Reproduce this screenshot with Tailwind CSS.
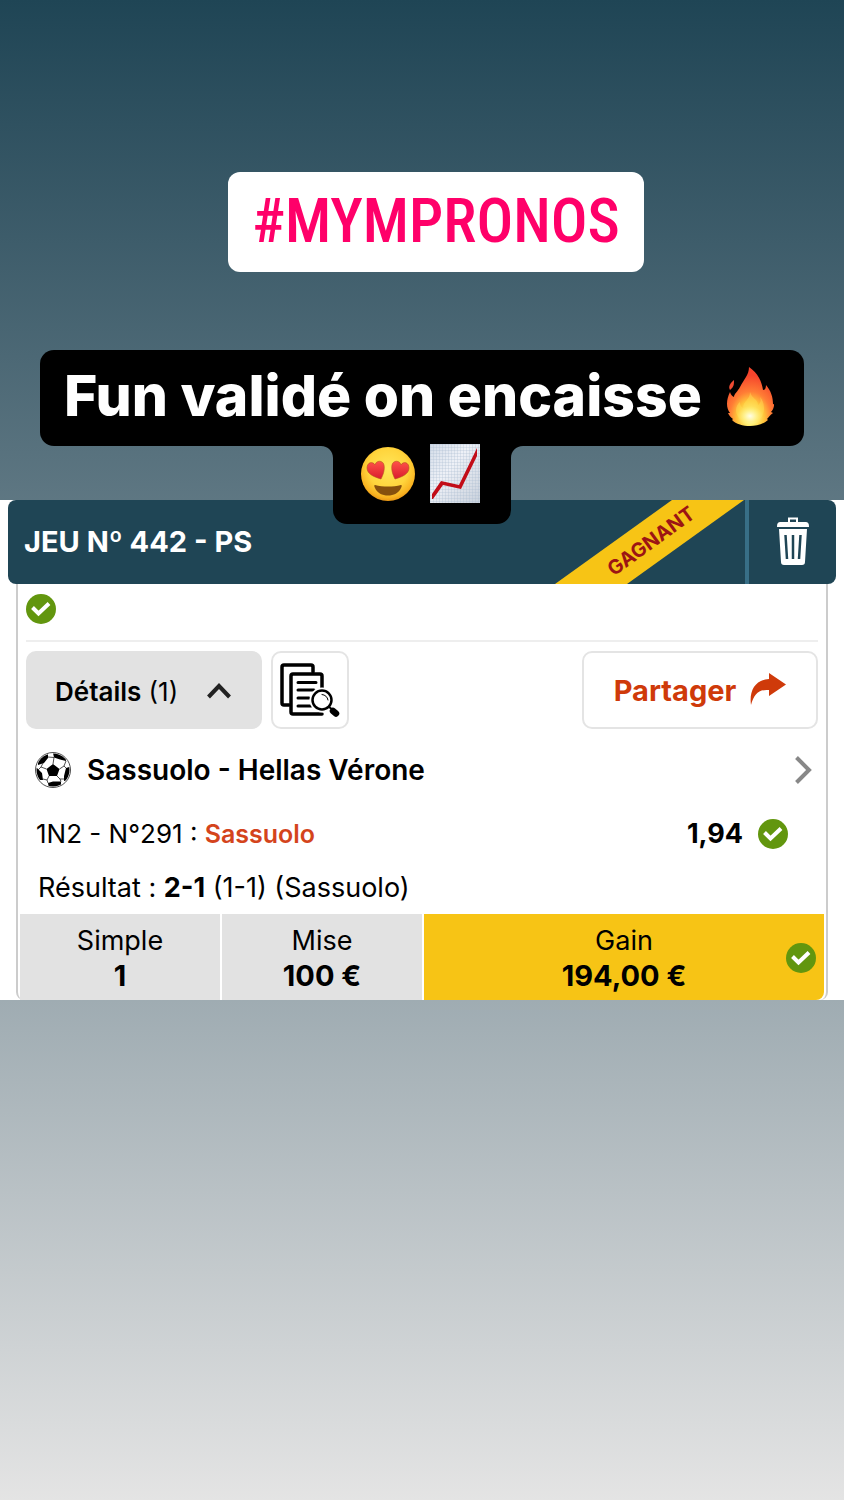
<!DOCTYPE html>
<html lang="fr">
<head>
<meta charset="utf-8">
<meta name="viewport" content="width=device-width, initial-scale=1">
<title>#MYMPRONOS</title>
<script src="https://cdn.jsdelivr.net/npm/@tailwindcss/browser@4"></script>
</head>
<body class="min-h-screen bg-linear-to-b from-[#1f4555] to-[#e4e4e4] font-['Inter',sans-serif] text-black">
<svg class="hidden" aria-hidden="true">
  <symbol id="check" viewBox="0 0 30 30"><circle cx="15" cy="15" r="15" fill="#62960e"/><path d="M6.500 13.500 12.500 19.500 23 9.500" fill="none" stroke="#fff" stroke-width="4"/></symbol>
</svg>

<header class="relative z-10 -mb-6 flex flex-col items-center pt-[172px]">
  <h1 class="ml-7 flex h-[100px] items-center rounded-xl bg-white px-6 font-['Roboto_Condensed','Liberation_Sans_Narrow',sans-serif] text-[61px] font-medium text-[#ff0069]">#MYMPRONOS</h1>
  <div class="mt-[78px] flex flex-col items-center">
    <p class="flex h-24 items-center gap-6 rounded-[14px] bg-black pr-[30px] pl-6 text-[57px] font-extrabold whitespace-nowrap text-white">
      <span class="pb-1">Fun validé on encaisse</span>
      <svg class="mb-1 h-[60px] w-12" viewBox="0 0 48 60" role="img" aria-label="feu">
        <defs>
          <radialGradient id="fire" cx=".5" cy=".86" r=".72"><stop offset="0" stop-color="#fffbd0"/><stop offset=".16" stop-color="#fff176"/><stop offset=".4" stop-color="#ffc43a"/><stop offset=".62" stop-color="#ff7d35"/><stop offset="1" stop-color="#f5442c"/></radialGradient>
          <radialGradient id="glow"><stop offset="0" stop-color="#fffde8"/><stop offset="1" stop-color="#fff176" stop-opacity="0"/></radialGradient>
        </defs>
        <path d="M23 1C32 7 36 16 37 24C39 24 40 22 40 19C45 25 47 31 47 38C49 37 48 43 45 46L47 47C44 49 43 51 41 53L42 54C36 59 30 60 24 60C17 60 10 58 6 54L7 53C4 51 3 49 2 47L4 47C0 42 0 34 4 26C5 29 6 30 8 31C8 28 12 25 14 21C18 13 23 9 23 1Z" fill="url(#fire)"/>
        <path d="M8 14C8 18 8 21 4 24C2 21 4 17 8 14Z" fill="#f04b32"/>
        <path d="M24 26C26 33 32 33 32 39C35 37 35 34 34 31C40 38 39 49 33 54C28 58 17 57 13 52C8 46 10 39 14 36C14 39 15 41 17 42C17 35 24 34 24 26Z" fill="#ffe45a" opacity=".4"/>
        <ellipse cx="24" cy="50" rx="13" ry="10" fill="url(#glow)"/>
      </svg>
    </p>
    <div class="flex items-start">
      <svg class="h-3 w-3" viewBox="0 0 12 12" aria-hidden="true"><path d="M0 0H12V12C12 5 7 0 0 0Z"/></svg>
      <div class="flex h-[78px] w-[178px] items-start gap-[15px] rounded-b-[14px] bg-black pl-7">
        <svg class="h-[56px] w-[54px]" viewBox="0 -1 54 56" role="img" aria-label="yeux en coeur">
          <defs>
            <radialGradient id="face" cx=".5" cy=".4" r=".62"><stop offset="0" stop-color="#ffe75a"/><stop offset=".6" stop-color="#ffd43c"/><stop offset=".86" stop-color="#f9b321"/><stop offset="1" stop-color="#e58e12"/></radialGradient>
            <linearGradient id="heart" x2="0" y2="1"><stop offset="0" stop-color="#ff5148"/><stop offset="1" stop-color="#d91c2e"/></linearGradient>
          </defs>
          <circle cx="27" cy="27" r="27" fill="url(#face)"/>
          <path d="M20 32C13 30 6 27 6 21C6 15 12 14 14 18C15 13 22 13 23 18C24 23 22 28 20 32Z" fill="url(#heart)" stroke="#b3541c" stroke-width=".6"/>
          <path d="M34 32C41 30 48 27 48 21C48 15 42 14 40 18C39 13 32 13 31 18C30 23 32 28 34 32Z" fill="url(#heart)" stroke="#b3541c" stroke-width=".6"/>
          <path d="M14 38C22 40 32 40 40 38C41 38 41 39 40 41C36 51 18 51 14 41C13 39 13 38 14 38Z" fill="#87500d"/>
        </svg>
        <svg class="-mt-0.5 h-[60px] w-[50px]" viewBox="0 0 50 60" role="img" aria-label="graphique en hausse">
          <defs>
            <linearGradient id="paper" x2="1" y2="1"><stop offset="0" stop-color="#d3dce8"/><stop offset=".4" stop-color="#eef1f7"/><stop offset="1" stop-color="#c9d1dc"/></linearGradient>
            <pattern id="grid" width="3" height="3" patternUnits="userSpaceOnUse"><path d="M0 .5H3M.5 0V3" stroke="#a9bbcf" stroke-width=".3"/></pattern>
          </defs>
          <rect width="50" height="59" fill="url(#paper)"/><rect width="50" height="59" fill="url(#grid)"/>
          <path d="M2 50 11 37 29 41 47 4V12L31 45 13 41 3 55H2Z" fill="#c20c18"/>
        </svg>
      </div>
      <svg class="h-3 w-3" viewBox="0 0 12 12" aria-hidden="true"><path d="M12 0H0V12C0 5 5 0 12 0Z"/></svg>
    </div>
  </div>
</header>

<main class="bg-white px-2">
  <div class="flex h-[84px] overflow-hidden rounded-lg bg-[#1f4555] text-white">
    <h2 class="flex flex-1 items-center pl-4 text-[29px] font-bold whitespace-nowrap">JEU Nº 442 - PS</h2>
    <svg class="h-[84px] w-[190px] overflow-visible" viewBox="0 0 190 84" role="img" aria-label="Gagnant">
      <path d="M117 0H189L72 84H0Z" fill="#f7c415"/>
      <text x="96" y="48" transform="rotate(-36 96 41)" text-anchor="middle" class="fill-[#9c1414] text-[20px] font-bold">GAGNANT</text>
    </svg>
    <button type="button" aria-label="Supprimer" class="flex w-[91px] items-center justify-center border-l-4 border-[#386f87]">
      <svg class="mb-0.5 h-12 w-8" viewBox="0 0 32 48">
        <path d="M12 6V1.500H20V6" fill="none" stroke="#fff" stroke-width="2"/>
        <path d="M0 10C0 6 1 5 4 5H28C31 5 32 6 32 10Z" fill="#fff"/>
        <path d="M2 12H30L28 45Q28 48 25 48H7Q4 48 4 45Z" fill="#fff"/>
        <path d="M8.500 18 10 42M16 18V42M23.500 18 22 42" stroke="#1f4555" stroke-width="2.500"/>
      </svg>
    </button>
  </div>

  <section class="mx-2 rounded-b-lg border-x-2 border-[#ccc]">
    <div class="px-2">
      <div class="flex h-[58px] border-b-2 border-[#eee] pt-[10px]">
        <svg class="h-[30px] w-[30px]" role="img" aria-label="Gagné"><use href="#check"/></svg>
      </div>
      <div class="flex gap-[9px] pt-[9px]">
        <button type="button" aria-expanded="true" class="flex h-[78px] w-[236px] items-center rounded-[10px] bg-[#e2e2e2] pt-0.5 pl-[29px] text-[26px] whitespace-nowrap">
          <span><span class="font-semibold">Détails</span> (1)</span>
          <svg class="ml-[29px] h-4 w-6" viewBox="0 0 24 16"><path d="M1.500 14 12 3 22.500 14" fill="none" stroke="#222" stroke-width="4"/></svg>
        </button>
        <button type="button" aria-label="Voir le ticket" class="flex h-[78px] w-[78px] items-center justify-center rounded-[10px] border-2 border-[#e4e4e4]">
          <svg class="h-[54px] w-[60px]" viewBox="0 0 60 54" fill="none" stroke="#000" stroke-width="3.500" stroke-linecap="round" stroke-linejoin="round">
            <path d="M9 42H4Q2 42 2 40V4Q2 2 4 2H31Q33 2 33 4V9"/>
            <path d="M42 51H13Q11 51 11 49V13Q11 11 13 11H40Q42 11 42 13V25"/>
            <path d="M18 19.500H36M18 27H34M18 35H29M18 43H31" stroke-width="3"/>
            <circle cx="42" cy="37" r="12.500" fill="#fff" stroke="none"/>
            <circle cx="42" cy="37" r="9.500" fill="#fff" stroke-width="2.500"/>
            <path d="M42 31.500Q47 32 48 37" stroke-width="1"/>
            <path d="M49 44 53 47" stroke-width="2"/><path d="M53 48 56 50.500" stroke-width="6.500"/>
          </svg>
        </button>
        <button type="button" class="ml-auto flex h-[78px] w-[236px] items-center justify-center gap-[14px] rounded-[10px] border-2 border-[#e4e4e4] pt-0.5 text-[29px] font-bold text-[#cf3a0a]">
          Partager
          <svg class="mb-1 h-8 w-9" viewBox="0 0 36 32"><path d="M1 32C-1 18 5 7 19 6V0L36 11.500 19 23V17C9 16 4 21 1 32Z" fill="currentColor"/></svg>
        </button>
      </div>
      <a href="#match" class="flex h-[82px] items-center pr-[6px] pl-[9px] text-[28px] font-semibold">
        <svg class="mr-4 h-9 w-9" viewBox="0 0 36 36" aria-hidden="true">
          <defs><clipPath id="ball"><circle cx="18" cy="18" r="16.500"/></clipPath></defs>
          <circle cx="18" cy="18" r="17.500" fill="#fff" stroke="#222" stroke-width=".8"/>
          <g clip-path="url(#ball)">
            <path d="M18 12 24.500 17 22 24H14L11.500 17ZM18 1 24 1 31 4 31 9 25 7.500 19 5.500ZM5 2 13 2 13 6 9 11 3 13 2 9ZM-1 16 2 16 7 21 8 28 3 28-1 22ZM13 31 18 29.500 26 29.500 26 34 22 37H14ZM29 24 31 16 37 14V22L34 28 29 29Z"/>
            <path d="M18 12 19 5.500M19 5.500 13 5M24.500 17 29 14 31 9M29 14 31 16M22 24 25 27 26 29.500M25 27 29 27M14 24 12 28 13 31M12 28 8 27M11.500 17 6 15 8 11M6 15 3 18" fill="none" stroke="#222" stroke-width=".8"/>
          </g>
        </svg>
        <span>Sassuolo - Hellas Vérone</span>
        <svg class="ml-auto h-7 w-[17px]" viewBox="0 0 17 28" aria-hidden="true"><path d="M1.500 1.500 14 14 1.500 26.500" fill="none" stroke="#888" stroke-width="4"/></svg>
      </a>
      <div class="flex h-[46px] items-center pr-[30px] pl-[10px] text-[26px]">
        <p>1N2 - N°291 : <span class="text-[25px] font-semibold text-[#d4441c]">Sassuolo</span></p>
        <strong class="mr-[15px] ml-auto text-[27px] font-bold">1,94</strong>
        <svg class="h-[30px] w-[30px]" role="img" aria-label="Gagné"><use href="#check"/></svg>
      </div>
      <p class="flex h-[57px] items-center pt-1.5 pl-3 text-[27px] whitespace-pre">Résultat : <strong class="font-bold">2-1</strong> (1-1) (Sassuolo)</p>
    </div>
    <dl class="mx-0.5 grid h-[86px] grid-cols-[1fr_1fr_2fr] gap-0.5 text-center text-[27px] leading-[35px]">
      <div class="bg-[#e2e2e2] pt-[9px]"><dt>Simple</dt><dd class="text-[29px] font-bold">1</dd></div>
      <div class="bg-[#e2e2e2] pt-[9px]"><dt>Mise</dt><dd class="text-[29px] font-bold">100 €</dd></div>
      <div class="relative rounded-br-lg bg-[#f7c415] pt-[9px]"><dt>Gain</dt><dd class="text-[29px] font-bold">194,00 €</dd>
        <svg class="absolute top-[29px] right-2 h-[30px] w-[30px]" aria-hidden="true"><use href="#check"/></svg>
      </div>
    </dl>
  </section>
</main>
</body>
</html>
